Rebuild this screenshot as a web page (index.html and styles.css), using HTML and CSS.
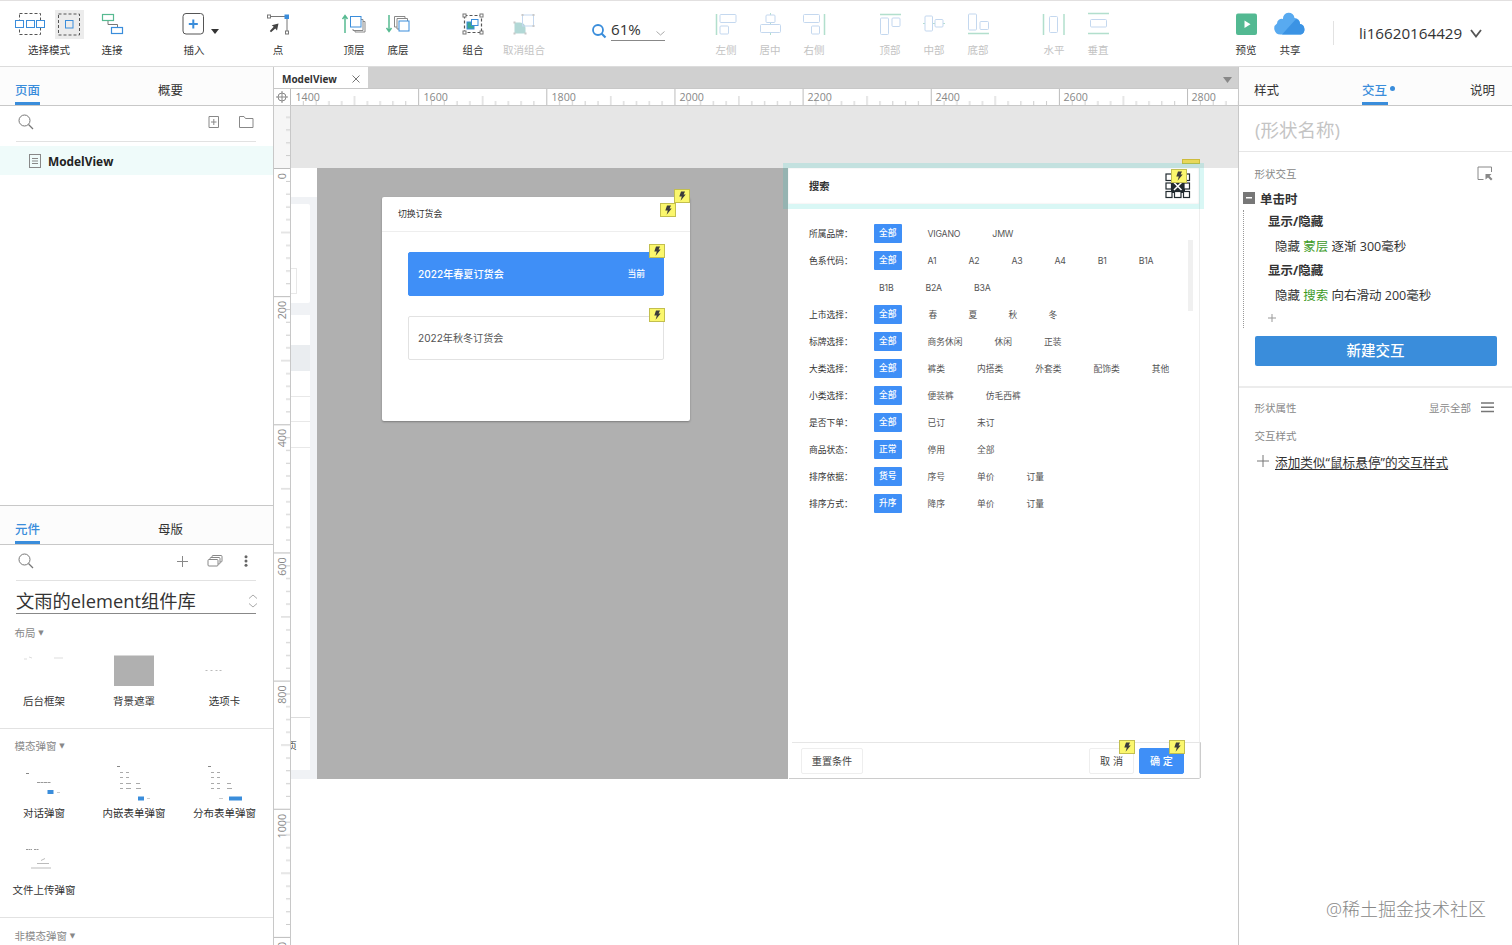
FILE: index.html
```html
<!DOCTYPE html>
<html lang="zh-CN">
<head>
    <meta charset="UTF-8">
    <meta name="viewport" content="width=device-width, initial-scale=1.0">
    <title>ModelView</title>
    <link rel="stylesheet" href="styles.css">
</head>
<body>

<svg width="0" height="0" class="defs">
    <symbol id="flash" viewBox="0 0 16 14">
        <rect x=".5" y=".5" width="15" height="13" fill="#fbf76d" stroke="#c3bf4f"/>
        <path d="M7 2.5h4L9.6 5.4h2.1L6.6 11.8l1.2-4.3H5.3z" fill="#3c3c3c"/>
    </symbol>
    <symbol id="search" viewBox="0 0 16 16">
        <circle cx="6.5" cy="6.5" r="5.5" fill="none" stroke="#777"/>
        <path d="M10.5 10.5l4.5 4.5" stroke="#777" stroke-width="1.2"/>
    </symbol>
</svg>

<div class="toolbar">
    <div class="tool select">
        <div class="icons">
            <svg width="30" height="24" viewBox="0 0 30 24" fill="none">
                <rect x="4.5" y="1.5" width="21" height="21" stroke="#555" stroke-dasharray="3 2"/>
                <g stroke="#3a8ddb" fill="#fff"><rect x=".5" y="8.5" width="8" height="7"/><rect x="11.5" y="8.5" width="8" height="7"/><rect x="21.5" y="8.5" width="8" height="7"/></g>
            </svg>
            <svg class="on" width="29" height="29" viewBox="0 0 29 29" fill="none">
                <rect x="3.5" y="4" width="21" height="21" stroke="#555" stroke-dasharray="3 2"/>
                <rect x="10.5" y="10.5" width="7.5" height="7.5" stroke="#3a8ddb"/>
            </svg>
        </div>
        <span>选择模式</span>
    </div>
    <div class="tool link">
        <svg width="24" height="24" viewBox="0 0 24 24" fill="none">
            <rect x="2.5" y="2.5" width="11" height="6" stroke="#57ba91" stroke-width="1.2"/>
            <path d="M8 9v3.5h9.5V15" stroke="#777"/>
            <rect x="11.5" y="15.5" width="11" height="6" stroke="#3a8ddb" stroke-width="1.2"/>
        </svg>
        <span>连接</span>
    </div>
    <div class="tool insert">
        <svg width="24" height="24" viewBox="0 0 24 24" fill="none">
            <rect x="1" y="1.5" width="20.5" height="20.5" rx="3" stroke="#555"/>
            <path d="M11.3 7.5v9M6.800 12h9" stroke="#3a8ddb" stroke-width="2"/>
        </svg>
        <svg class="caret" width="8" height="5" viewBox="0 0 8 5"><path d="M0 0h8L4 5z" fill="#333"/></svg>
        <span>插入</span>
    </div>
    <div class="tool point">
        <svg width="24" height="24" viewBox="0 0 24 24" fill="none">
            <path d="M4 4.5h15M21 7v12" stroke="#777"/>
            <rect x="1.500" y="3" width="3" height="3" stroke="#777"/><rect x="18.500" y="2.500" width="4.500" height="4.500" fill="#3a8ddb"/><rect x="19.500" y="19" width="3" height="3" stroke="#777"/>
            <path d="M12.500 11.500l-1.500 7-1.700-2-4.300 3.700-1.200-1.200 3.900-4.300-2-1.500z" fill="#444"/>
        </svg>
        <span>点</span>
    </div>
    <div class="tool top">
        <svg width="24" height="24" viewBox="0 0 24 24" fill="none">
            <path d="M3 21V4M.5 7L3 3.500 5.500 7" stroke="#57ba91" stroke-width="1.500"/>
            <path d="M11 17v1.500h10V7.500h-2M13 18.500v1.500h10V9.500h-2" stroke="#888"/>
            <rect x="8.500" y="4.500" width="10.500" height="10.500" stroke="#3a8ddb" fill="#fff"/>
        </svg>
        <span>顶层</span>
    </div>
    <div class="tool">
        <svg width="24" height="24" viewBox="0 0 24 24" fill="none">
            <path d="M3 3v16M.5 16L3 19.500 5.500 16" stroke="#57ba91" stroke-width="1.500"/>
            <path d="M11 15H8.500V4.500H19V7M13 17h-2V6.500h10.500V9" stroke="#888"/>
            <rect x="13" y="9" width="10" height="10" stroke="#3a8ddb" fill="#fff"/>
        </svg>
        <span>底层</span>
    </div>
    <div class="tool group">
        <svg width="24" height="24" viewBox="0 0 24 24" fill="none">
            <rect x="3.500" y="3.500" width="17" height="17" stroke="#555" stroke-width="1.200" stroke-dasharray="3 2"/>
            <g stroke="#777" fill="#fff"><rect x="2" y="2" width="3" height="3"/><rect x="19" y="2" width="3" height="3"/><rect x="2" y="19" width="3" height="3"/><rect x="19" y="19" width="3" height="3"/></g>
            <rect x="6" y="10" width="7" height="7" fill="#3aa68f" stroke="#3a8ddb"/>
            <rect x="10.500" y="7.500" width="6.500" height="6" stroke="#3a8ddb" fill="#fff"/>
        </svg>
        <span>组合</span>
    </div>
    <div class="tool ungroup off">
        <svg width="24" height="24" viewBox="0 0 24 24" fill="none">
            <path d="M2.500 10.500h5.500a5.500 5.500 0 0 1 5.500 5.500v5.500h-11z" fill="#57aaa5"/>
            <rect x="10.500" y="3" width="11" height="11" stroke="#7da9dd"/>
            <g fill="#888"><rect x="1.500" y="9.500" width="2" height="2"/><rect x="1.500" y="20.500" width="2" height="2"/><rect x="12.500" y="20.500" width="2" height="2"/><rect x="9.500" y="2" width="2" height="2"/><rect x="20.500" y="2" width="2" height="2"/><rect x="20.500" y="13" width="2" height="2"/></g>
        </svg>
        <span>取消组合</span>
    </div>
    <div class="zoom">
        <svg width="15" height="15" viewBox="0 0 15 15" fill="none" stroke="#3a8ddb"><circle cx="6" cy="6" r="5" stroke-width="1.800"/><path d="M9.500 9.500l4 4" stroke-width="2.200"/></svg>
        <div class="percent">61%<svg width="9" height="5" viewBox="0 0 9 5" fill="none" stroke="#aaa"><path d="M.5.5l4 3.500 4-3.500"/></svg></div>
    </div>
    <div class="tool align off">
        <svg width="24" height="24" viewBox="0 0 24 24" fill="none" stroke="#7da9dd"><path d="M2.500 2v21" stroke="#57ba91" stroke-width="1.500"/><rect x="6" y="2.500" width="16" height="8" rx="1"/><rect x="6" y="14" width="8.500" height="8" rx="1"/></svg>
        <span>左侧</span>
    </div>
    <div class="tool off">
        <svg width="24" height="24" viewBox="0 0 24 24" fill="none" stroke="#7da9dd"><path d="M12.500 1v2M12.500 10.500V12M12.500 20.500V23" stroke="#57ba91"/><rect x="8" y="3" width="9" height="7.500" rx="1"/><rect x="2.500" y="12.500" width="20" height="8" rx="1"/></svg>
        <span>居中</span>
    </div>
    <div class="tool off">
        <svg width="24" height="24" viewBox="0 0 24 24" fill="none" stroke="#7da9dd"><path d="M22.500 2v21" stroke="#57ba91" stroke-width="1.500"/><rect x="1.500" y="2.500" width="16" height="8" rx="1"/><rect x="9.500" y="14" width="8" height="8" rx="1"/></svg>
        <span>右侧</span>
    </div>
    <div class="tool align2 off">
        <svg width="24" height="24" viewBox="0 0 24 24" fill="none" stroke="#7da9dd"><path d="M2 2.500h21" stroke="#57ba91" stroke-width="1.500"/><rect x="2.500" y="6" width="8" height="16.500" rx="1"/><rect x="14" y="6" width="8" height="8.500" rx="1"/></svg>
        <span>顶部</span>
    </div>
    <div class="tool off">
        <svg width="24" height="24" viewBox="0 0 24 24" fill="none" stroke="#7da9dd"><path d="M1 11.500h2M10.500 11.500H13M21 11.500h2" stroke="#57ba91"/><rect x="3" y="4" width="7.500" height="15" rx="1"/><rect x="13" y="7.500" width="8" height="7.500" rx="1"/></svg>
        <span>中部</span>
    </div>
    <div class="tool off">
        <svg width="24" height="24" viewBox="0 0 24 24" fill="none" stroke="#7da9dd"><path d="M2 21.500h21" stroke="#57ba91" stroke-width="1.500"/><rect x="2.500" y="2" width="8" height="16" rx="1"/><rect x="14" y="9.500" width="8.500" height="8" rx="1"/></svg>
        <span>底部</span>
    </div>
    <div class="tool align2 off">
        <svg width="24" height="24" viewBox="0 0 24 24" fill="none" stroke="#7da9dd"><path d="M1.500 2v21M22 2v21" stroke="#57ba91" stroke-width="1.500"/><rect x="7.500" y="4.500" width="8" height="16" rx="1"/></svg>
        <span>水平</span>
    </div>
    <div class="tool off">
        <svg width="24" height="24" viewBox="0 0 24 24" fill="none" stroke="#7da9dd"><path d="M2 1.500h21M2 21.500h21" stroke="#57ba91" stroke-width="1.500"/><rect x="4.500" y="7.500" width="16" height="7.500" rx="1"/></svg>
        <span>垂直</span>
    </div>
    <div class="tool preview">
        <svg width="24" height="24" viewBox="0 0 24 24"><rect x="2" y="1.500" width="21" height="21.500" rx="2" fill="#53b992"/><path d="M10.500 8.500l6 3.700-6 3.800z" fill="#fff"/></svg>
        <span>预览</span>
    </div>
    <div class="tool">
        <svg width="32" height="24" viewBox="0 0 32 24"><path d="M6.500 22.500A6 6 0 0 1 3 11.500a4.800 4.800 0 0 1 6-4.500 5.600 5.600 0 0 1 11.500-1 5.500 5.500 0 0 1 5.500 6A5.500 5.500 0 0 1 27 22.500z" fill="#58aaf0"/><path d="M8 22.500L22 7a5.500 5.500 0 0 1 4 5A5.500 5.500 0 0 1 27 22.500z" fill="#3b93e4"/></svg>
        <span>共享</span>
    </div>
    <div class="user">li16620164429<svg width="12" height="9" viewBox="0 0 12 9" fill="none" stroke="#555" stroke-width="1.800"><path d="M1 1l5 6.500L11 1"/></svg></div>
</div>

<div class="body">
    <div class="left">
        <div class="tabs"><span class="active">页面</span><span>概要</span></div>
        <div class="find">
            <svg width="16" height="16"><use href="#search"/></svg>
            <svg class="push" width="12" height="14" viewBox="0 0 12 14" fill="none" stroke="#888"><path d="M1 1.500h9.500v11H1zM5.800 4v6M3 7h5.500"/></svg>
            <svg width="15" height="14" viewBox="0 0 15 14" fill="none" stroke="#888"><path d="M.5 1.500h4.500l1.500 2h7.500v9H.5z"/></svg>
        </div>
        <div class="page">
            <svg width="12" height="14" viewBox="0 0 12 14" fill="none" stroke="#888"><rect x=".5" y=".5" width="11" height="13"/><path d="M3 4.500h6M3 7h6M3 9.500h6"/></svg>
            ModelView
        </div>
        <div class="tabs second"><span class="active">元件</span><span>母版</span></div>
        <div class="find">
            <svg width="16" height="16"><use href="#search"/></svg>
            <svg class="push add" width="11" height="11" viewBox="0 0 11 11" stroke="#888"><path d="M5.500 0v11M0 5.500h11"/></svg>
            <svg width="16" height="14" viewBox="0 0 16 14" fill="#fff" stroke="#888"><rect x="5" y="1.500" width="10" height="6.500" rx="1"/><rect x="3" y="3.500" width="10" height="6.500" rx="1"/><rect x="1" y="5.500" width="10" height="6.500" rx="1"/></svg>
            <svg class="dots" width="4" height="12" viewBox="0 0 4 12" fill="#666"><circle cx="2" cy="1.800" r="1.500"/><circle cx="2" cy="6" r="1.500"/><circle cx="2" cy="10.200" r="1.500"/></svg>
        </div>
        <div class="library">文雨的element组件库<svg width="10" height="14" viewBox="0 0 10 14" fill="none" stroke="#aaa"><path d="M1 4.500l4-3.500 4 3.500M1 9.500L5 13l4-3.500"/></svg></div>
        <div class="section">
            <h4>布局 <i>▼</i></h4>
            <div class="widgets">
                <div class="widget"><svg width="42" height="34" viewBox="0 0 42 34" stroke="#ddd"><path d="M1 5h3M6 3l3 1M31 4h9"/></svg>后台框架</div>
                <div class="widget"><svg width="42" height="34" viewBox="0 0 42 34"><rect x="1" y="1.500" width="40" height="30.500" fill="#b0b0b0"/></svg>背景遮罩</div>
                <div class="widget"><svg width="42" height="34" viewBox="0 0 42 34" stroke="#bbb"><path d="M1.500 16.500h2M6.500 16.500h2M11.500 16.500h2M15.500 16.500h2"/></svg>选项卡</div>
            </div>
        </div>
        <div class="section modal">
            <h4>模态弹窗 <i>▼</i></h4>
            <div class="widgets">
                <div class="widget"><svg width="42" height="37" viewBox="0 0 42 37" stroke="#888"><path d="M3 9.500h3"/><path d="M14 18.500h14" stroke="#999" stroke-dasharray="3 .5"/><path d="M34 28.500h3" stroke="#ccc"/><rect x="25" y="26.500" width="5" height="3" fill="#3a8ddb" stroke="#3a8ddb"/></svg>对话弹窗</div>
                <div class="widget"><svg width="42" height="37" viewBox="0 0 42 37" stroke="#aaa"><path d="M4 2.500h3" stroke="#888"/><path d="M7 8.500h3M13 8.500h3M7 13.500h3M13 13.500h3M7 19.500h3M13 19.500h5M23 19.500h4M7 24.500h3M13 24.500h5M23 24.500h5"/><path d="M34 34.500h3" stroke="#ccc"/><rect x="25.500" y="33" width="5" height="3" fill="#3a8ddb" stroke="#3a8ddb"/></svg>内嵌表单弹窗</div>
                <div class="widget"><svg width="42" height="37" viewBox="0 0 42 37" stroke="#aaa"><path d="M4 2.500h3" stroke="#888"/><path d="M7 8.500h3M13 8.500h3M7 13.500h3M13 13.500h3M7 19.500h3M13 19.500h3M23 19.500h4M7 24.500h3M13 24.500h3M23 24.500h5"/><path d="M15 34.500h4" stroke="#ccc"/><rect x="25.500" y="33" width="12" height="3" fill="#3a8ddb" stroke="#3a8ddb"/></svg>分布表单弹窗</div>
                <div class="widget"><svg width="42" height="37" viewBox="0 0 42 37" stroke="#bbb"><path d="M3 8.500h6M11 8.500h5" stroke="#999" stroke-dasharray="2 .5"/><path d="M18 19.500l4-2M14 22.500h12M8 27h20"/></svg>文件上传弹窗</div>
            </div>
        </div>
        <div class="section more"><h4>非模态弹窗 <i>▼</i></h4></div>
    </div>

    <div class="center">
        <div class="files">
            <div class="file">ModelView<svg width="8" height="8" viewBox="0 0 8 8" stroke="#777"><path d="M.5.5l7 7M7.500.5l-7 7"/></svg></div>
            <svg width="9" height="6" viewBox="0 0 9 6"><path d="M0 0h9L4.500 6z" fill="#888"/></svg>
        </div>
        <div class="ruler-row">
            <svg class="corner" width="16" height="16" viewBox="0 0 16 16" fill="none" stroke="#888"><circle cx="8" cy="8" r="4"/><path d="M8 2v12M2 8h12"/></svg>
            <svg class="ruler-x" width="948" height="16">
                <pattern id="ticksX" width="128.150" height="16" patternUnits="userSpaceOnUse">
                    <path d="M.5 0v16" stroke="#bbb"/>
                    <path d="M64.500 7v9" stroke="#ccc"/>
                    <path d="M13.300 12v4M26.100 12v4M38.900 12v4M51.700 12v4M77.400 12v4M90.200 12v4M103 12v4M115.800 12v4" stroke="#ccc"/>
                </pattern>
                <rect width="948" height="16" fill="url(#ticksX)"/>
                <text x="5.500" y="12">1400</text><text x="133.500" y="12">1600</text><text x="261.500" y="12">1800</text><text x="389.500" y="12">2000</text><text x="517.500" y="12">2200</text><text x="645.500" y="12">2400</text><text x="773.500" y="12">2600</text><text x="901.500" y="12">2800</text>
            </svg>
        </div>
        <div class="work">
            <svg class="ruler-y" width="16" height="839">
                <pattern id="ticksY" y="62" width="16" height="128.150" patternUnits="userSpaceOnUse">
                    <path d="M0 .5h16" stroke="#bbb"/>
                    <path d="M7 64.500h9" stroke="#ccc"/>
                    <path d="M12 13.300h4M12 26.100h4M12 38.900h4M12 51.700h4M12 77.400h4M12 90.200h4M12 103h4M12 115.800h4" stroke="#ccc"/>
                </pattern>
                <rect width="16" height="62" fill="#f6f6f6"/>
                <rect width="16" height="839" fill="url(#ticksY)"/>
                <g text-anchor="end">
                    <text transform="translate(12 67) rotate(-90)">0</text>
                    <text transform="translate(12 195) rotate(-90)">200</text>
                    <text transform="translate(12 323) rotate(-90)">400</text>
                    <text transform="translate(12 451.500) rotate(-90)">600</text>
                    <text transform="translate(12 579.500) rotate(-90)">800</text>
                    <text transform="translate(12 708) rotate(-90)">1000</text>
                    <text transform="translate(12 836) rotate(-90)">1200</text>
                </g>
            </svg>
            <div class="canvas">
                <div class="outside"></div>
                <!-- right edge of the previous artboard -->
                <div class="board">
                    <div class="card c1"><b></b></div>
                    <div class="card c2"></div>
                    <div class="thead"></div>
                    <div class="tr"></div><div class="tr"></div><div class="tr"></div>
                    <div class="rest"></div>
                    <div class="pager">页</div>
                </div>
                <div class="mask"></div>

                <div class="dialog">
                    <div class="dialog-title">切换订货会</div>
                    <div class="option current"><span>2022年春夏订货会</span><em>当前</em><svg class="flash"><use href="#flash"/></svg></div>
                    <div class="option"><span>2022年秋冬订货会</span><svg class="flash"><use href="#flash"/></svg></div>
                    <svg class="flash f1"><use href="#flash"/></svg>
                    <svg class="flash f2"><use href="#flash"/></svg>
                </div>

                <div class="drawer">
                    <div class="drawer-title">搜索</div>
                    <div class="filters">
                        <div class="row latin"><label>所属品牌：</label><b>全部</b><span>VIGANO</span><span>JMW</span></div>
                        <div class="row latin"><label>色系代码：</label><b>全部</b><span>A1</span><span>A2</span><span>A3</span><span>A4</span><span>B1</span><span>B1A</span></div>
                        <div class="row latin"><label></label><span class="first">B1B</span><span>B2A</span><span>B3A</span></div>
                        <div class="row season"><label>上市选择：</label><b>全部</b><span>春</span><span>夏</span><span>秋</span><span>冬</span></div>
                        <div class="row"><label>标牌选择：</label><b>全部</b><span>商务休闲</span><span>休闲</span><span>正装</span></div>
                        <div class="row"><label>大类选择：</label><b>全部</b><span>裤类</span><span>内搭类</span><span>外套类</span><span>配饰类</span><span>其他</span></div>
                        <div class="row"><label>小类选择：</label><b>全部</b><span>便装裤</span><span>仿毛西裤</span></div>
                        <div class="row"><label>是否下单：</label><b>全部</b><span>已订</span><span>未订</span></div>
                        <div class="row"><label>商品状态：</label><b>正常</b><span>停用</span><span>全部</span></div>
                        <div class="row"><label>排序依据：</label><b>货号</b><span>序号</span><span>单价</span><span>订量</span></div>
                        <div class="row"><label>排序方式：</label><b>升序</b><span>降序</span><span>单价</span><span>订量</span></div>
                        <div class="scrollbar"></div>
                    </div>
                    <div class="drawer-foot">
                        <div class="btn reset">重置条件</div>
                        <div class="btn cancel">取 消<svg class="flash"><use href="#flash"/></svg></div>
                        <div class="btn ok">确 定<svg class="flash"><use href="#flash"/></svg></div>
                    </div>
                </div>

                <div class="flash-edge"></div>
                <div class="selection"></div>
                <svg class="handles" width="26" height="26" viewBox="0 0 26 26">
                    <rect x="6" y="6" width="14" height="14" fill="#222b30"/>
                    <g fill="#fff" stroke="#222b30" stroke-width="1.200"><rect x="1" y="1" width="6" height="6.500"/><rect x="9.500" y="1" width="6.500" height="6.500"/><rect x="18.500" y="1" width="6" height="6.500"/><rect x="1" y="10" width="5.500" height="6"/><rect x="19" y="10" width="5.500" height="6"/><rect x="1" y="18.500" width="6" height="6"/><rect x="9.500" y="18.500" width="6.500" height="6"/><rect x="18.500" y="18.500" width="6" height="6"/></g>
                    <path d="M9 9.500l7.500 7.500M16.500 9.500L9 17" stroke="#fff" stroke-width="1.500"/>
                </svg>
                <svg class="flash f3"><use href="#flash"/></svg>
            </div>
        </div>
    </div>

    <div class="right">
        <div class="tabs"><span>样式</span><span class="active">交互<i></i></span><span>说明</span></div>
        <div class="shape-name">(形状名称)</div>
        <div class="line">形状交互
            <svg width="16" height="15" viewBox="0 0 16 15" fill="none"><path d="M6.500 13.500H1V1h13.500v5" stroke="#888"/><path d="M8.500 8h6l-2 2 3 3-1.500 1.500-3-3-2.500 2z" fill="#888"/></svg>
        </div>
        <div class="event"><i></i>单击时</div>
        <div class="actions">
            <strong>显示/隐藏</strong>
            <p>隐藏 <em>蒙层</em> 逐渐 300毫秒</p>
            <strong>显示/隐藏</strong>
            <p>隐藏 <em>搜索</em> 向右滑动 200毫秒</p>
            <svg width="8" height="8" viewBox="0 0 8 8" stroke="#999"><path d="M4 0v8M0 4h8"/></svg>
        </div>
        <button class="new">新建交互</button>
        <div class="line props">形状属性 <span>显示全部</span>
            <svg width="13" height="11" viewBox="0 0 13 11" stroke="#777" stroke-width="1.500"><path d="M0 1h13M0 5.300h13M0 9.600h13"/></svg>
        </div>
        <div class="line styles">交互样式</div>
        <div class="add-style"><svg width="12" height="12" viewBox="0 0 12 12" stroke="#777"><path d="M6 0v12M0 6h12"/></svg><a>添加类似“鼠标悬停”的交互样式</a></div>
    </div>
</div>

<div class="watermark">@稀土掘金技术社区</div>

</body>
</html>
```

FILE: styles.css
```css
* {
    box-sizing: border-box;
}
body {
    margin: 0;
    width: 1512px;
    height: 945px;
    overflow: hidden;
    background: #fff;
    color: #333;
    font-family: "Open Sans", "Noto Sans CJK SC", sans-serif;
    font-size: 12.5px;
}
svg {
    display: block;
    flex: none;
}
i, em {
    font-style: normal;
}
.defs {
    position: absolute;
}

/* toolbar */
.toolbar {
    display: flex;
    height: 67px;
    border-top: 1px solid #e2e0e0;
    border-bottom: 1px solid #dcdcdc;
}
.tool {
    position: relative;
    display: flex;
    flex-direction: column;
    align-items: center;
    width: 44px;
    padding-top: 11px;
}
.tool span {
    margin-top: 6px;
    font-size: 10.5px;
    line-height: 16px;
    white-space: nowrap;
}
.tool.off svg {
    opacity: 0.45;
}
.tool.off span {
    color: #c3c3c3;
}
.select {
    width: 70px;
    margin-left: 14px;
}
.select .icons {
    display: flex;
    justify-content: space-between;
    align-items: center;
    width: 69px;
    height: 24px;
}
.select .on {
    background: #ececec;
}
.link {
    margin-left: 6px;
}
.insert {
    margin-left: 38px;
}
.caret {
    position: absolute;
    left: 39px;
    top: 28px;
}
.point {
    margin-left: 40px;
}
.top {
    margin-left: 32px;
}
.group {
    margin-left: 31px;
}
.ungroup {
    margin-left: 7px;
}
.zoom {
    display: flex;
    gap: 4px;
    width: 74px;
    margin-left: 46px;
    padding-top: 17px;
}
.zoom > svg {
    margin-top: 6px;
}
.percent {
    display: flex;
    justify-content: space-between;
    width: 54px;
    height: 23px;
    border-bottom: 1px solid #888;
    font-size: 15.2px;
    line-height: 22px;
}
.percent svg {
    margin-top: 13px;
}
.align {
    margin-left: 38px;
}
.align2 {
    margin-left: 32px;
}
.preview {
    margin-left: 104px;
}
.user {
    display: flex;
    align-items: center;
    gap: 8px;
    height: 24px;
    margin: 20px 0 0 21px;
    padding-left: 25px;
    border-left: 1px solid #e2e2e2;
    font-size: 15.2px;
}

/* panels */
.body {
    display: flex;
    height: 878px;
}
.left {
    width: 274px;
    border-right: 1px solid #c8c8c8;
}
.tabs {
    display: flex;
    height: 39px;
    padding: 0 15px;
    background: #fcfcfc;
    border-bottom: 1px solid #c8c8c8;
    line-height: 48px;
}
.left .tabs span {
    width: 26px;
    margin-right: 118px;
    white-space: nowrap;
}
.tabs .active {
    color: #3a8ddb;
    font-weight: 500;
    border-bottom: 3px solid #3a8ddb;
}
.find {
    display: flex;
    align-items: center;
    gap: 19px;
    height: 36px;
    margin: 0 17px 0 16px;
    padding: 0 2px 3px;
    border-bottom: 1px solid #e2e2e2;
}
.push {
    margin-left: auto;
}
.dots {
    margin: 0 6px 0 2px;
}
.page {
    display: flex;
    align-items: center;
    gap: 7px;
    height: 29px;
    margin-top: 4px;
    padding-left: 29px;
    background: #effbfa;
    font-weight: 700;
    font-size: 11.9px;
    color: #222;
}
.second {
    height: 40px;
    margin-top: 330px;
    border-top: 1px solid #c8c8c8;
}
.library {
    display: flex;
    justify-content: space-between;
    align-items: center;
    height: 33px;
    margin: 0 17px 0 16px;
    padding-top: 8px;
    border-bottom: 1px solid #888;
    font-size: 18.3px;
    line-height: 24px;
}
.library svg {
    margin-right: -2px;
}
.section {
    height: 115px;
    padding: 11px 0 0;
    border-bottom: 1px solid #e2e2e2;
}
h4 {
    margin: 0 0 0 14.5px;
    font-size: 10.5px;
    font-weight: 400;
    line-height: 16px;
    color: #888;
}
h4 i {
    font-family: "DejaVu Sans", sans-serif;
    font-size: 7px;
    vertical-align: 2px;
}
.widgets {
    display: grid;
    grid-template-columns: 90px 90px 91px;
    margin-left: -1px;
    padding-top: 13px;
}
.widget {
    display: flex;
    flex-direction: column;
    align-items: center;
    font-size: 10.5px;
    line-height: 16px;
    white-space: nowrap;
}
.widget svg {
    margin-bottom: 5px;
}
.modal {
    height: 189px;
    padding-top: 9px;
}
.modal .widgets {
    padding-top: 10px;
    row-gap: 20px;
}
.modal .widget svg {
    margin-bottom: 4px;
}
.more {
    height: 27px;
    border: none;
    padding-top: 10px;
}

/* editor */
.center {
    display: flex;
    flex-direction: column;
    width: 964px;
}
.files {
    display: flex;
    justify-content: space-between;
    height: 22px;
    padding-right: 6px;
    background: #d0d0d0;
    border-bottom: 1px solid #c8c8c8;
}
.files > svg {
    margin-top: 10px;
}
.file {
    display: flex;
    align-items: center;
    justify-content: space-between;
    width: 94px;
    padding: 2px 8px 0;
    background: #fff;
    font-size: 10px;
    font-weight: 700;
}
.ruler-row {
    display: flex;
    height: 17px;
    border-bottom: 1px solid #c8c8c8;
}
.ruler-row text, .ruler-y text {
    font-size: 10.7px;
    fill: #888;
}
.ruler-y {
    width: 17px;
    border-right: 1px solid #c8c8c8;
}
.work {
    display: flex;
    height: 839px;
}
.canvas {
    position: relative;
    width: 947px;
    overflow: hidden;
    font-family: Inter, "Noto Sans CJK SC", sans-serif;
    font-size: 8.75px;
}
.outside {
    height: 62px;
    background: #e6e6e6;
}
.board {
    display: flex;
    flex-direction: column;
    width: 26px;
    height: 611px;
    padding: 36px 7px 9px 0;
    background: linear-gradient(#fff 29px, #f0f2f5 29px);
}
.board > div {
    flex: none;
    background: #fff;
}
.board .c1 {
    height: 99px;
    padding-top: 64px;
    border-radius: 0 2px 2px 0;
}
.c1 b {
    display: block;
    width: 6px;
    height: 26px;
    border: 1px solid #e8e8e8;
    border-left: none;
}
.board .c2 {
    height: 30px;
    margin-top: 12px;
}
.board .thead {
    height: 26px;
    background: #eaedf0;
}
.tr {
    height: 25.5px;
    border-bottom: 1px solid #e8e8e8;
}
.board .rest {
    flex: 1;
}
.board .pager {
    height: 53px;
    padding-top: 22px;
    border-top: 1px solid #ddd;
    text-indent: -3px;
    line-height: 12px;
}
.mask {
    position: absolute;
    left: 26px;
    top: 62px;
    width: 471px;
    height: 611px;
    background: #b0b0b0;
}
.flash {
    position: absolute;
    width: 16px;
    height: 14px;
}

.dialog {
    position: absolute;
    left: 91px;
    top: 91px;
    width: 308px;
    height: 224px;
    background: #fff;
    border-radius: 2px;
    box-shadow: 0 1px 2px rgba(0, 0, 0, 0.3);
}
.dialog-title {
    height: 35px;
    padding-left: 16px;
    border-bottom: 1px solid #eee;
    font-size: 8.9px;
    line-height: 34px;
}
.option {
    position: relative;
    display: flex;
    justify-content: space-between;
    align-items: center;
    height: 44px;
    margin: 20px 26px 0;
    padding: 0 18px 2px 9px;
    border: 1px solid #e2e2e2;
    border-radius: 2px;
    font-size: 10.1px;
    color: #555;
}
.option.current {
    background: #3f8ff7;
    border-color: #3f8ff7;
    color: #fff;
    font-weight: 500;
}
.option em {
    font-size: 8.75px;
}
.option .flash {
    right: -2px;
    top: -9px;
}
.f1 {
    left: 292px;
    top: -8px;
}
.f2 {
    left: 278px;
    top: 6px;
}

.drawer {
    position: absolute;
    left: 498px;
    top: 62px;
    display: flex;
    flex-direction: column;
    width: 411px;
    height: 611px;
    background: #fff;
    border-right: 1px solid #eee;
    border-bottom: 1px solid #ccc;
}
.drawer-title {
    height: 35px;
    padding-left: 20px;
    font-size: 10.2px;
    font-weight: 700;
    line-height: 36px;
}
.filters {
    position: relative;
    flex: 1;
    padding: 17px 0 0 20px;
}
.row {
    display: flex;
    align-items: center;
    height: 27px;
    color: #555;
    white-space: nowrap;
}
.row label {
    width: 65px;
    color: #333;
}
.row b {
    width: 27.5px;
    margin-right: -6px;
    background: #3f8ff7;
    border-radius: 1px;
    color: #fff;
    font-weight: 500;
    line-height: 19px;
    text-align: center;
}
.row span {
    margin-left: 32px;
}
.latin span {
    letter-spacing: -0.2px;
}
.row .first {
    margin-left: 5px;
}
.season b {
    margin-right: -5px;
}
.season span {
    width: 8px;
}
.scrollbar {
    position: absolute;
    left: 399px;
    top: 37px;
    width: 5px;
    height: 71px;
    background: #f0f0f0;
}
.drawer-foot {
    display: flex;
    align-items: center;
    gap: 5px;
    height: 36px;
    margin-left: 3px;
    margin-right: -2px;
    padding: 0 16px 0 9px;
    border-top: 1px solid #e6e6e6;
    border-right: 1px solid #ccc;
}
.btn {
    position: relative;
    height: 26px;
    border: 1px solid #eee;
    border-radius: 2px;
    font-size: 10.1px;
    line-height: 24px;
    text-align: center;
    color: #444;
}
.reset {
    width: 62px;
    margin-right: auto;
}
.cancel {
    width: 45px;
}
.ok {
    width: 45px;
    background: #3f8ff7;
    border-color: #3f8ff7;
    color: #fff;
    font-weight: 500;
}
.btn .flash {
    right: -2px;
    top: -9px;
}
.flash-edge {
    position: absolute;
    left: 891px;
    top: 53px;
    width: 18px;
    height: 5px;
    background: #e8d85a;
    border: 1px solid #cdbb3c;
}
.selection {
    position: absolute;
    left: 492px;
    top: 57px;
    width: 421px;
    height: 46px;
    border: 5px solid rgba(0, 200, 190, 0.15);
    box-shadow: inset 0 0 2px rgba(0, 0, 0, 0.12);
}
.handles {
    position: absolute;
    left: 874px;
    top: 67px;
}
.f3 {
    left: 880px;
    top: 63px;
}

/* inspector */
.right {
    width: 274px;
    border-left: 1px solid #c8c8c8;
}
.right .tabs {
    justify-content: space-between;
    padding-right: 16px;
}
.right .tabs span {
    position: relative;
    width: 26px;
    white-space: nowrap;
}
.tabs i {
    position: absolute;
    left: 28px;
    top: 19px;
    width: 5px;
    height: 5px;
    border-radius: 50%;
    background: #3a8ddb;
}
.shape-name {
    height: 46px;
    padding-left: 16px;
    border-bottom: 1px solid #e6e6e6;
    font-size: 18.5px;
    line-height: 48px;
    color: #c4c4c4;
}
.line {
    display: flex;
    justify-content: space-between;
    align-items: center;
    height: 16px;
    margin-top: 13px;
    padding: 0 19px 0 15.5px;
    font-size: 10.5px;
    color: #888;
}
.event {
    display: flex;
    align-items: center;
    gap: 5px;
    height: 22px;
    margin-top: 6px;
    padding-left: 4px;
    font-weight: 700;
}
.event i {
    width: 12px;
    height: 12px;
    background: linear-gradient(#fff, #fff) center / 6px 1.5px no-repeat #777;
}
.actions {
    height: 118px;
    margin-top: 1px;
    margin-left: 4px;
    padding-left: 24px;
    border-left: 1px dotted #999;
}
.actions strong {
    display: block;
    height: 24px;
    line-height: 24px;
}
.actions p {
    height: 25px;
    margin: 0 0 0 7px;
    line-height: 25px;
}
.actions em {
    color: #3c9a1f;
}
.actions svg {
    margin-top: 6px;
}
.new {
    display: block;
    width: 242px;
    height: 30px;
    margin: 8px 0 0 15.5px;
    padding: 0;
    border: none;
    border-radius: 2px;
    background: #3a8ddb;
    color: #fff;
    font: 500 14.5px/28px "Open Sans", "Noto Sans CJK SC", sans-serif;
}
.props {
    height: 36px;
    margin-top: 20px;
    padding-top: 5px;
    padding-right: 18px;
    border-top: 2px solid #ececec;
}
.props span {
    margin-left: auto;
    margin-right: 10px;
}
.styles {
    margin-top: 5px;
}
.add-style {
    display: flex;
    align-items: center;
    gap: 6px;
    height: 20px;
    margin-top: 8px;
    padding-left: 18px;
    font-size: 12.65px;
}
.add-style a {
    text-decoration: underline;
    text-underline-offset: 2px;
}

.watermark {
    position: absolute;
    right: 26px;
    bottom: 24px;
    font-size: 18px;
    line-height: 24px;
    font-weight: 300;
    color: #888;
}
```
